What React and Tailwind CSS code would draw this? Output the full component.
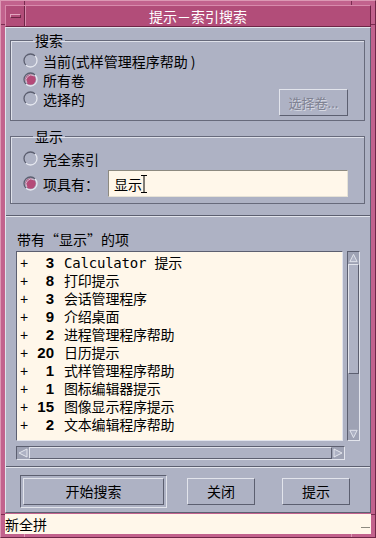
import React from 'react'

const items = [
  ['3', 'Calculator 提示'],
  ['8', '打印提示'],
  ['3', '会话管理程序'],
  ['9', '介绍桌面'],
  ['2', '进程管理程序帮助'],
  ['20', '日历提示'],
  ['1', '式样管理程序帮助'],
  ['1', '图标编辑器提示'],
  ['15', '图像显示程序提示'],
  ['2', '文本编辑程序帮助'],
]

const Radio = ({ on }) => (
  <svg width="15" height="15" viewBox="0 0 15 15" className="shrink-0">
    {on && <circle cx="7.5" cy="7.5" r="5.2" fill="#b44a78" />}
    <path d="M2.9 12.1 A6.5 6.5 0 0 1 12.1 2.9" stroke="#5c5f70" fill="none" strokeWidth="1.3" />
    <path d="M12.1 2.9 A6.5 6.5 0 0 1 2.9 12.1" stroke="#e6e8f0" fill="none" strokeWidth="1.3" />
    {on && <path d="M3.9 11.1 A5.2 5.2 0 0 1 11.1 3.9" stroke="#d9dbe5" fill="none" strokeWidth="0.8" />}
  </svg>
)

const RadioRow = ({ on, label, className = '' }) => (
  <div className={'flex items-center h-[19px] ' + className}>
    <Radio on={on} />
    <span className="ml-[5px] leading-[14px]">{label}</span>
  </div>
)

const Arrow = ({ dir }) => {
  const pts = {
    up: '2,10 6,2 10,10',
    down: '2,2 6,10 10,2',
    left: '10,2 2,6 10,10',
    right: '2,2 10,6 2,10',
  }[dir]
  return (
    <svg width="12" height="12" viewBox="0 0 12 12">
      <polygon points={pts} fill="#aeb2c4" stroke="#e4e6ee" strokeWidth="1" />
    </svg>
  )
}

const Btn = ({ children, className = '' }) => (
  <div
    className={
      'h-[27px] flex items-center justify-center bg-[#aeb2c4] border border-t-[#e2e4ec] border-l-[#e2e4ec] border-r-[#5c5f70] border-b-[#5c5f70] ' +
      className
    }
  >
    {children}
  </div>
)

export default function App() {
  return (
    <div className="relative w-[376px] h-[538px] bg-[#c2628d] border border-t-[#dc98b4] border-l-[#dc98b4] border-r-[#6e2546] border-b-[#6e2546] pt-[4px] pl-[4px] pr-[4px] pb-[3px] font-['Noto_Sans_CJK_SC',sans-serif] text-[14px] text-black overflow-hidden">
      {/* frame notches */}
      <div className="absolute left-[23px] top-0 w-[1px] h-[4px] bg-[#7a2c50]" />
      <div className="absolute left-[350px] top-0 w-[1px] h-[4px] bg-[#7a2c50]" />
      <div className="absolute left-0 top-[23px] w-[4px] h-[1px] bg-[#7a2c50]" />
      <div className="absolute right-0 top-[23px] w-[4px] h-[1px] bg-[#7a2c50]" />
      <div className="absolute left-[23px] bottom-0 w-[1px] h-[3px] bg-[#dc98b4]" />
      <div className="absolute left-[350px] bottom-0 w-[1px] h-[3px] bg-[#dc98b4]" />
      <div className="absolute left-0 bottom-[22px] w-[4px] h-[1px] bg-[#7a2c50]" />
      <div className="absolute right-0 bottom-[22px] w-[4px] h-[1px] bg-[#7a2c50]" />

      <div className="flex flex-col h-full">
        {/* title bar */}
        <div className="h-[22px] flex bg-[#b24d79] border border-t-[#d88aac] border-l-[#d88aac] border-r-[#6e2546] border-b-[#6e2546]">
          <div className="w-[19px] h-full flex items-center justify-center border-r border-r-[#6e2546]">
            <div className="w-[11px] h-[4px] border border-t-[#e3a5bf] border-l-[#e3a5bf] border-r-[#6e2546] border-b-[#6e2546]" />
          </div>
          <div className="flex-1 flex items-center justify-center text-white leading-[14px] border-l border-l-[#d88aac]">
            提示－索引搜索
          </div>
        </div>

        {/* content */}
        <div className="flex-1 flex flex-col bg-[#aeb2c4] border border-t-[#e2e4ec] border-l-[#e2e4ec] border-r-[#5c5f70] border-b-[#5c5f70]">
          <div className="px-[4px] pt-[5px]">
            <fieldset className="mr-[1px] border border-[#676a7b] shadow-[inset_1px_1px_0_#dfe1ea] pl-[12px] pr-[16px] pt-[4px] pb-[4px]">
              <legend className="ml-[10px] px-[2px] leading-[14px]">搜索</legend>
              <RadioRow label="当前(式样管理程序帮助 )" />
              <RadioRow on label="所有卷" />
              <div className="flex items-start justify-between">
                <RadioRow label="选择的" />
                <Btn className="w-[69px] h-[23px] text-[#7f8292] [text-shadow:1px_1px_0_#d6d8e2] text-[13px]">选择卷...</Btn>
              </div>
            </fieldset>

            <fieldset className="mt-[8px] mr-[1px] border border-[#676a7b] shadow-[inset_1px_1px_0_#dfe1ea] pl-[12px] pr-[16px] pt-[6px] pb-[6px]">
              <legend className="ml-[10px] px-[2px] leading-[14px]">显示</legend>
              <RadioRow label="完全索引" />
              <div className="flex items-center mt-[2px]">
                <div className="w-[85px]">
                  <RadioRow on label="项具有：" />
                </div>
                <div className="w-[240px] h-[27px] bg-[#fff7ea] border border-t-[#8d8a80] border-l-[#8d8a80] border-r-[#e6e2d6] border-b-[#e6e2d6] flex items-center pl-[5px]">
                  <span className="leading-[14px]">显示</span>
                  <svg width="6" height="18" viewBox="0 0 6 18" className="-ml-[1px]">
                    <path d="M0 0.5 H6 M0 17.5 H6 M3 0 V18" stroke="#000" strokeWidth="1" />
                  </svg>
                </div>
              </div>
            </fieldset>
          </div>

          <div className="mt-[11px] h-[2px] border-t border-t-[#5c5f70] border-b border-b-[#e2e4ec]" />

          <div className="px-[10px]">
            <div className="mt-[15px] pl-[1px] leading-[14px]">带有“显示”的项</div>

            <div className="mt-[5px] flex">
              <div className="w-[329px] h-[190px] bg-[#fff7ea] border border-t-[#5c5f70] border-l-[#5c5f70] border-r-[#e2e4ec] border-b-[#e2e4ec] pt-[2px] pl-[3px] overflow-hidden">
                {items.map(([n, t], i) => (
                  <div key={i} className="flex items-center h-[18px]">
                    <span className="w-[14px] font-['Liberation_Sans',sans-serif] text-[14px] leading-[14px]">+</span>
                    <span className="w-[20px] text-right font-['Liberation_Sans',sans-serif] font-bold text-[15px] leading-[14px]">{n}</span>
                    <span className="ml-[10px] leading-[14px] font-['DejaVu_Sans_Mono','Noto_Sans_CJK_SC',monospace] text-[14px] tracking-[-0.2px]">{t}</span>
                  </div>
                ))}
              </div>
              <div className="ml-[4px] w-[13px] h-[190px] bg-[#9ea2b4] border border-t-[#5c5f70] border-l-[#5c5f70] border-r-[#e2e4ec] border-b-[#e2e4ec] flex flex-col">
                <div className="h-[12px] flex items-center justify-center">
                  <Arrow dir="up" />
                </div>
                <div className="h-[110px] bg-[#aeb2c4] border border-t-[#e2e4ec] border-l-[#e2e4ec] border-r-[#5c5f70] border-b-[#5c5f70]" />
                <div className="flex-1" />
                <div className="h-[12px] flex items-center justify-center">
                  <Arrow dir="down" />
                </div>
              </div>
            </div>

            <div className="mt-[5px] w-[329px] h-[14px] bg-[#9ea2b4] border border-t-[#5c5f70] border-l-[#5c5f70] border-r-[#e2e4ec] border-b-[#e2e4ec] flex">
              <div className="w-[12px] flex items-center justify-center">
                <Arrow dir="left" />
              </div>
              <div className="flex-1 bg-[#aeb2c4] border border-t-[#e2e4ec] border-l-[#e2e4ec] border-r-[#5c5f70] border-b-[#5c5f70]" />
              <div className="w-[12px] flex items-center justify-center">
                <Arrow dir="right" />
              </div>
            </div>
          </div>

          <div className="mt-[6px] h-[2px] border-t border-t-[#5c5f70] border-b border-b-[#e2e4ec]" />

          <div className="flex items-center pl-[14px] mt-[7px]">
            <div className="w-[147px] h-[33px] p-[2px] border border-t-[#5c5f70] border-l-[#5c5f70] border-r-[#e2e4ec] border-b-[#e2e4ec]">
              <Btn className="w-full">开始搜索</Btn>
            </div>
            <Btn className="ml-[20px] w-[68px]">关闭</Btn>
            <Btn className="ml-[27px] w-[68px]">提示</Btn>
          </div>
        </div>

        {/* status bar */}
        <div className="relative h-[20px] bg-[#fff7ea] flex items-center leading-[14px] mt-[1px]">
          新全拼
          <div className="absolute right-[1px] top-[13px] w-[9px] h-[1px] bg-[#8d8a80]" />
        </div>
      </div>
    </div>
  )
}
